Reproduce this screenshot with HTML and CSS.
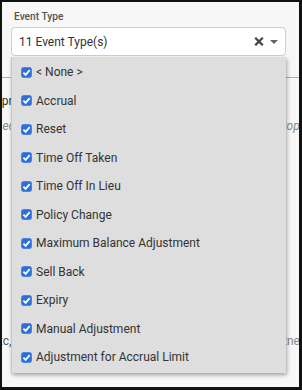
FILE: index.html
```html
<!DOCTYPE html>
<html>
<head>
<meta charset="utf-8">
<link rel="stylesheet" href="styles.css">
</head>
<body>
<div class="frame">
  <div class="field">
    <div class="label">Event Type</div>
    <div class="select">
      <span class="value">11 Event Type(s)</span>
      <svg class="clear" width="10" height="9" viewBox="0 0 10 9"><path d="M1.2 0.8 L8.8 8.2 M8.8 0.8 L1.2 8.2" stroke="#444" stroke-width="2.3" fill="none"/></svg>
      <svg class="caret" width="8" height="4" viewBox="0 0 8 4"><path d="M0 0 H8 L4 4 Z" fill="#666"/></svg>
    </div>
  </div>
  <div class="panel">
    <div class="row r1"><span class="t-dark clip-a">Apr 01, 2024</span></div>
    <div class="row r2"><span class="t-muted clip-b">Used</span><span class="t-muted clip-c">Stopped</span></div>
    <div class="row r3"><span class="t-mid clip-d">Etc,</span><span class="t-light clip-e">Partner</span></div>
  </div>
  <ul class="menu">
    <li class="opt"><svg class="cb" viewBox="0 0 11 11"><rect x="0.5" y="0.5" width="10" height="10" rx="2" fill="#2c6edb" stroke="#4a84e2"/><path d="M2.4 5.7 L4.6 7.9 L8.7 3.2" stroke="#fff" stroke-width="1.8" fill="none"/></svg><span>&lt; None &gt;</span></li>
    <li class="opt"><svg class="cb" viewBox="0 0 11 11"><rect x="0.5" y="0.5" width="10" height="10" rx="2" fill="#2c6edb" stroke="#4a84e2"/><path d="M2.4 5.7 L4.6 7.9 L8.7 3.2" stroke="#fff" stroke-width="1.8" fill="none"/></svg><span>Accrual</span></li>
    <li class="opt"><svg class="cb" viewBox="0 0 11 11"><rect x="0.5" y="0.5" width="10" height="10" rx="2" fill="#2c6edb" stroke="#4a84e2"/><path d="M2.4 5.7 L4.6 7.9 L8.7 3.2" stroke="#fff" stroke-width="1.8" fill="none"/></svg><span>Reset</span></li>
    <li class="opt"><svg class="cb" viewBox="0 0 11 11"><rect x="0.5" y="0.5" width="10" height="10" rx="2" fill="#2c6edb" stroke="#4a84e2"/><path d="M2.4 5.7 L4.6 7.9 L8.7 3.2" stroke="#fff" stroke-width="1.8" fill="none"/></svg><span>Time Off Taken</span></li>
    <li class="opt"><svg class="cb" viewBox="0 0 11 11"><rect x="0.5" y="0.5" width="10" height="10" rx="2" fill="#2c6edb" stroke="#4a84e2"/><path d="M2.4 5.7 L4.6 7.9 L8.7 3.2" stroke="#fff" stroke-width="1.8" fill="none"/></svg><span>Time Off In Lieu</span></li>
    <li class="opt"><svg class="cb" viewBox="0 0 11 11"><rect x="0.5" y="0.5" width="10" height="10" rx="2" fill="#2c6edb" stroke="#4a84e2"/><path d="M2.4 5.7 L4.6 7.9 L8.7 3.2" stroke="#fff" stroke-width="1.8" fill="none"/></svg><span>Policy Change</span></li>
    <li class="opt"><svg class="cb" viewBox="0 0 11 11"><rect x="0.5" y="0.5" width="10" height="10" rx="2" fill="#2c6edb" stroke="#4a84e2"/><path d="M2.4 5.7 L4.6 7.9 L8.7 3.2" stroke="#fff" stroke-width="1.8" fill="none"/></svg><span>Maximum Balance Adjustment</span></li>
    <li class="opt"><svg class="cb" viewBox="0 0 11 11"><rect x="0.5" y="0.5" width="10" height="10" rx="2" fill="#2c6edb" stroke="#4a84e2"/><path d="M2.4 5.7 L4.6 7.9 L8.7 3.2" stroke="#fff" stroke-width="1.8" fill="none"/></svg><span>Sell Back</span></li>
    <li class="opt"><svg class="cb" viewBox="0 0 11 11"><rect x="0.5" y="0.5" width="10" height="10" rx="2" fill="#2c6edb" stroke="#4a84e2"/><path d="M2.4 5.7 L4.6 7.9 L8.7 3.2" stroke="#fff" stroke-width="1.8" fill="none"/></svg><span>Expiry</span></li>
    <li class="opt"><svg class="cb" viewBox="0 0 11 11"><rect x="0.5" y="0.5" width="10" height="10" rx="2" fill="#2c6edb" stroke="#4a84e2"/><path d="M2.4 5.7 L4.6 7.9 L8.7 3.2" stroke="#fff" stroke-width="1.8" fill="none"/></svg><span>Manual Adjustment</span></li>
    <li class="opt"><svg class="cb" viewBox="0 0 11 11"><rect x="0.5" y="0.5" width="10" height="10" rx="2" fill="#2c6edb" stroke="#4a84e2"/><path d="M2.4 5.7 L4.6 7.9 L8.7 3.2" stroke="#fff" stroke-width="1.8" fill="none"/></svg><span>Adjustment for Accrual Limit</span></li>
  </ul>
</div>
</body>
</html>
```
FILE: styles.css
```css
* { box-sizing: border-box; }
html, body { margin: 0; padding: 0; }
body { font-family: Roboto, "Liberation Sans", sans-serif; background: #fff; }
.frame {
  position: relative;
  width: 302px;
  height: 390px;
  border-style: solid;
  border-color: #111;
  border-width: 2px 3px 3px 2px;
  background: #f7f7f7;
  overflow: hidden;
}
.field { padding: 8px 13px 0 9px; }
.label {
  font-size: 10.2px;
  font-weight: 500;
  line-height: 13px;
  color: #555;
  padding-left: 3px;
  margin-bottom: 4px;
}
.select {
  height: 29px;
  background: #fff;
  border: 1px solid #cfcfcf;
  border-radius: 4px;
  display: flex;
  align-items: center;
  padding: 0 7px 0 7px;
}
.value { flex: 1; font-size: 12px; color: #333; }
.clear { display: block; margin-right: 6px; }
.caret { display: block; }
.panel {
  margin-top: 21px;
  border-top: 1px solid #8fb1ea;
  padding-top: 15px;
}
.row { display: flex; justify-content: space-between; font-size: 12px; line-height: 16px; white-space: nowrap; }
.r2 { margin-top: 9px; font-style: italic; }
.r3 { margin-top: 199px; }
.t-dark { color: #333; }
.t-muted { color: #888; }
.t-mid { color: #555; }
.t-light { color: #888; }
.clip-a { margin-left: -8px; }
.clip-b { margin-left: -13px; }
.clip-c { margin-right: -20px; }
.clip-d { margin-left: -10px; }
.clip-e { margin-right: -5px; }
.menu {
  position: absolute;
  top: 55px;
  left: 9px;
  width: 275px;
  margin: 0;
  padding: 1px 0 1px;
  list-style: none;
  background: #dedede;
  border-left: 1px solid #c9c9c9;
  box-shadow: 1px 2px 4px rgba(0,0,0,0.35);
}
.opt {
  height: 28.5px;
  display: flex;
  align-items: center;
  padding-left: 9px;
  font-size: 12px;
  color: #333;
}
.cb { width: 11px; height: 11px; display: block; margin-right: 4px; flex: none; }
```
